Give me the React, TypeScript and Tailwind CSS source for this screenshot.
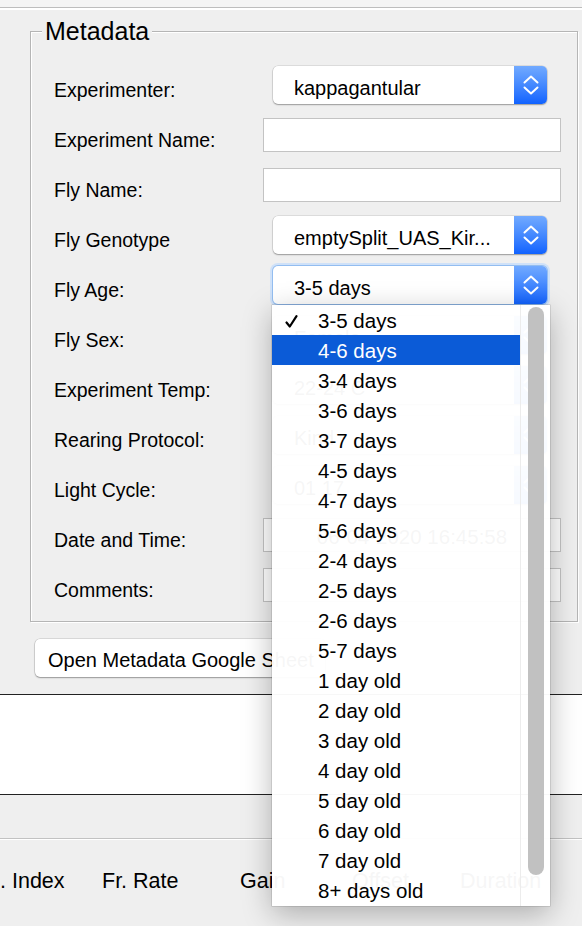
function Stepper() {
  return (
    <div className="flex w-[33px] items-center justify-center bg-gradient-to-b from-[#72aaff] to-[#0f62ff]">
      <svg width="16" height="20" viewBox="0 0 16 20" fill="none" stroke="white" strokeWidth="2" strokeLinecap="round" strokeLinejoin="round">
        <path d="M1.5 7.5 L8 1.5 L14.5 7.5" />
        <path d="M1.5 12.5 L8 18.5 L14.5 12.5" />
      </svg>
    </div>
  )
}

function Select({ value, focus }: { value: string; focus?: boolean }) {
  return (
    <div
      className={
        focus
          ? "ml-[10px] flex h-[38px] w-[274px] overflow-hidden rounded-[5px] bg-white shadow-[0_0_0_1px_#93bdf0,0_0_0_3px_#cfe1f8]"
          : "ml-[10px] flex h-[38px] w-[274px] overflow-hidden rounded-[5px] bg-white shadow-[0_0_0_0.5px_rgba(0,0,0,0.15),0_1px_1.5px_rgba(0,0,0,0.3)]"
      }
    >
      <div className="flex flex-1 items-center pl-[21px] pt-[6px] text-[20px] leading-[20px] text-black">{value}</div>
      <Stepper />
    </div>
  )
}

function Field({ value }: { value?: string }) {
  return (
    <div className="flex h-[34px] w-[298px] items-center justify-center border border-[#c3c3c3] bg-white pt-[4px] text-[20.5px] leading-[20px] text-black">
      {value}
    </div>
  )
}

const rows: { label: string; kind: "select" | "field"; value?: string; focus?: boolean }[] = [
  { label: "Experimenter:", kind: "select", value: "kappagantular" },
  { label: "Experiment Name:", kind: "field" },
  { label: "Fly Name:", kind: "field" },
  { label: "Fly Genotype", kind: "select", value: "emptySplit_UAS_Kir..." },
  { label: "Fly Age:", kind: "select", value: "3-5 days", focus: true },
  { label: "Fly Sex:", kind: "select", value: "Female" },
  { label: "Experiment Temp:", kind: "select", value: "22-24 C" },
  { label: "Rearing Protocol:", kind: "select", value: "Kind" },
  { label: "Light Cycle:", kind: "select", value: "01 17" },
  { label: "Date and Time:", kind: "field", value: "06-04-2020 16:45:58" },
  { label: "Comments:", kind: "field" },
]

const ages = [
  "3-5 days",
  "4-6 days",
  "3-4 days",
  "3-6 days",
  "3-7 days",
  "4-5 days",
  "4-7 days",
  "5-6 days",
  "2-4 days",
  "2-5 days",
  "2-6 days",
  "5-7 days",
  "1 day old",
  "2 day old",
  "3 day old",
  "4 day old",
  "5 day old",
  "6 day old",
  "7 day old",
  "8+ days old",
]

export default function App() {
  return (
    <div className="relative h-[926px] w-[582px] overflow-hidden bg-[#efefef] font-['Liberation_Sans',Arial,sans-serif] text-black">
      {/* window strip */}
      <div className="h-[8px] border-b border-[#bdbdbd] bg-[#f4f4f4]" />
      <div className="h-[2px] bg-white" />

      {/* Metadata group */}
      <fieldset className="ml-[30px] mt-[9px] w-[548px] border border-[#b5b5b5] pb-[11px] pl-[23px] pt-[16px] shadow-[1px_1px_0_#fff,inset_1px_1px_0_#fff]">
        <legend className="-ml-[12px] bg-[#efefef] px-[3px] text-[25px] leading-[25px]">Metadata</legend>
        {rows.map((r) => (
          <div key={r.label} className="flex h-[50px] items-center">
            <div className="mt-[9px] w-[209px] text-[19.5px] leading-[20px]">{r.label}</div>
            {r.kind === "select" ? <Select value={r.value ?? ""} focus={r.focus} /> : <Field value={r.value} />}
          </div>
        ))}
      </fieldset>

      <div className="ml-[35px] mt-[17px] flex h-[38px] w-[290px] items-center rounded-[5px] bg-white pl-[13px] pt-[3px] text-[20px] leading-[20px] shadow-[0_0_0_0.5px_rgba(0,0,0,0.18),0_1px_1.5px_rgba(0,0,0,0.3)]">
        Open Metadata Google Sheet
      </div>

      {/* preview area */}
      <div className="mt-[17px] h-px bg-[#222]" />
      <div className="h-[99px] bg-white" />
      <div className="h-px bg-[#222]" />
      <div className="h-[43px]" />
      <div className="h-px bg-[#c2c2c2]" />
      <div className="h-px bg-white" />

      {/* column headers */}
      <div className="flex pt-[31px] text-[21.5px] leading-[21px]">
        <div className="w-[102px]">. Index</div>
        <div className="w-[138px]">Fr. Rate</div>
        <div className="w-[112px]">Gain</div>
        <div className="w-[108px]">Offset</div>
        <div>Duration</div>
      </div>

      {/* open popup menu */}
      <div className="absolute left-[272px] top-[305px] flex h-[601px] w-[278px] bg-white/[0.965] shadow-[0_0_0_0.5px_rgba(0,0,0,0.2),0_8px_28px_rgba(0,0,0,0.28)]">
        <div className="w-[248px]">
          {ages.map((a, i) => (
            <div
              key={a}
              className={
                i === 1
                  ? "flex h-[30px] items-center bg-[#0b5bd7] pt-[2px] text-[20.5px] leading-[20px] text-white"
                  : "flex h-[30px] items-center pt-[2px] text-[20.5px] leading-[20px] text-black"
              }
            >
              <span className="flex w-[46px] pl-[13px]">
                {i === 0 && (
                  <svg width="13" height="13" viewBox="0 0 13 13" fill="none" stroke="black" strokeWidth="2.2" strokeLinecap="round" strokeLinejoin="round">
                    <path d="M1.5 7.5 L4.8 11.5 L11.5 1.2" />
                  </svg>
                )}
              </span>
              {a}
            </div>
          ))}
        </div>
        <div className="flex-1 border-l border-[#ececec] pl-[7px] pt-[2px]">
          <div className="h-[568px] w-[16px] rounded-full bg-[#c1c1c1]" />
        </div>
      </div>
    </div>
  )
}
